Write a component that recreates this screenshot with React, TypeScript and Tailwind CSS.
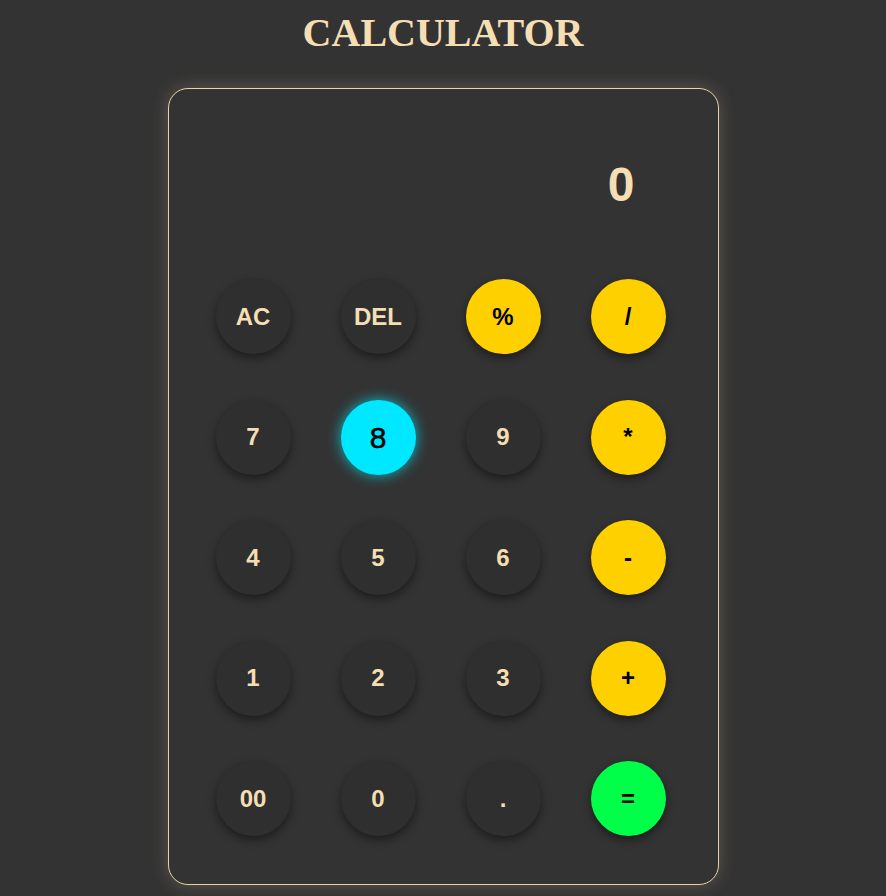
import React from "react";

type Btn = { label: string; kind: "dark" | "yellow" | "green" | "cyan" };

const rows: Btn[][] = [
  [
    { label: "AC", kind: "dark" },
    { label: "DEL", kind: "dark" },
    { label: "%", kind: "yellow" },
    { label: "/", kind: "yellow" },
  ],
  [
    { label: "7", kind: "dark" },
    { label: "8", kind: "cyan" },
    { label: "9", kind: "dark" },
    { label: "*", kind: "yellow" },
  ],
  [
    { label: "4", kind: "dark" },
    { label: "5", kind: "dark" },
    { label: "6", kind: "dark" },
    { label: "-", kind: "yellow" },
  ],
  [
    { label: "1", kind: "dark" },
    { label: "2", kind: "dark" },
    { label: "3", kind: "dark" },
    { label: "+", kind: "yellow" },
  ],
  [
    { label: "00", kind: "dark" },
    { label: "0", kind: "dark" },
    { label: ".", kind: "dark" },
    { label: "=", kind: "green" },
  ],
];

function Key({ b }: { b: Btn }) {
  const base =
    "w-[75px] h-[75px] rounded-full flex items-center justify-center font-['Liberation_Sans',Arial,sans-serif]";
  if (b.kind === "dark")
    return (
      <div className={`${base} bg-[#2f2f2f] text-[#f5deb3] text-[24px] font-bold shadow-[0_4px_10px_rgba(0,0,0,0.45)]`}>
        {b.label}
      </div>
    );
  if (b.kind === "yellow")
    return (
      <div className={`${base} bg-[#ffd000] text-black text-[24px] font-bold shadow-[0_4px_10px_rgba(0,0,0,0.45)]`}>
        {b.label}
      </div>
    );
  if (b.kind === "green")
    return (
      <div className={`${base} bg-[#00ff48] text-black text-[24px] font-bold shadow-[0_4px_10px_rgba(0,0,0,0.45)]`}>
        {b.label}
      </div>
    );
  return (
    <div className={`${base} bg-[#00e8ff] text-black text-[30px] font-normal [-webkit-text-stroke:0.5px_black] shadow-[0_0_14px_rgba(0,232,255,0.75)]`}>
      {b.label}
    </div>
  );
}

export default function App() {
  return (
    <div className="min-h-[896px] w-full bg-[#333333] flex flex-col items-center">
      <h1 className="mt-[10px] h-[46px] leading-[46px] text-[40px] font-bold text-[#f5deb3] font-['Liberation_Serif','Times_New_Roman',serif]">
        CALCULATOR
      </h1>
      <div className="mt-[32px] w-[551px] rounded-[20px] border border-[#e8d2a6] bg-[#333333] shadow-[0_0_18px_rgba(245,222,179,0.22)] pt-[68px] pb-[48px] pl-[47px]">
        <div className="h-[56px] leading-[56px] text-right pr-[83px] text-[48px] font-bold text-[#f5deb3] font-['Liberation_Sans',Arial,sans-serif]">
          0
        </div>
        <div className="mt-[66px] grid grid-cols-[repeat(4,75px)] gap-x-[50px] gap-y-[45.5px]">
          {rows.flat().map((b, i) => (
            <Key key={i} b={b} />
          ))}
        </div>
      </div>
    </div>
  );
}
